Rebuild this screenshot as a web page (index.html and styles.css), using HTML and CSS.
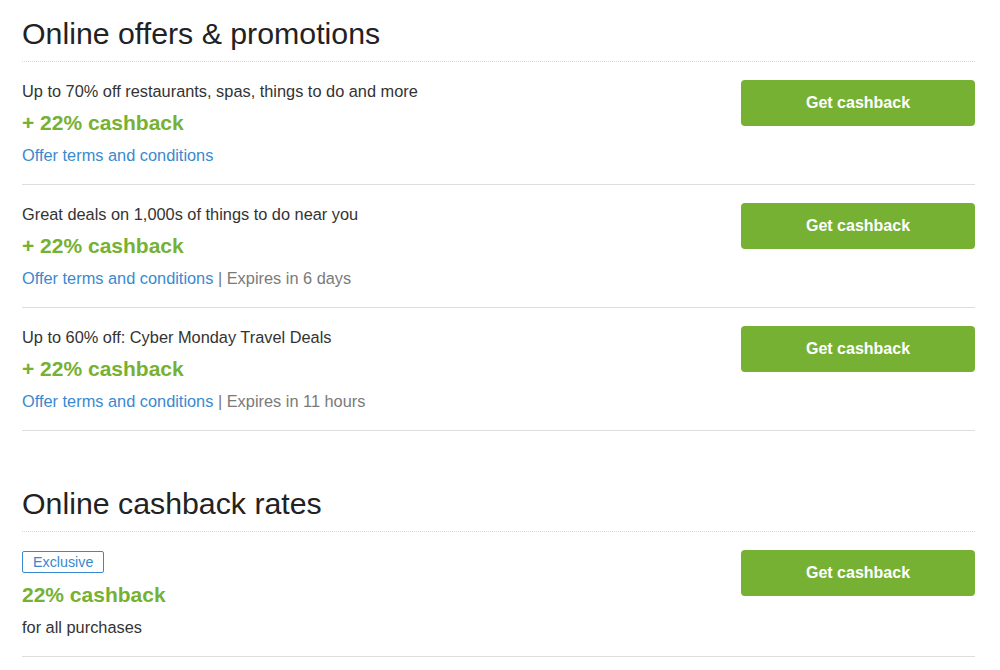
FILE: index.html
```html
<!DOCTYPE html>
<html>
<head>
<meta charset="utf-8">
<link rel="stylesheet" href="styles.css">
</head>
<body>
<main class="page">
  <section class="section">
    <h2 class="section-title">Online offers &amp; promotions</h2>
    <div class="offer">
      <div class="offer-info">
        <div class="offer-desc">Up to 70% off restaurants, spas, things to do and more</div>
        <div class="offer-rate">+ 22% cashback</div>
        <div class="offer-meta"><a class="terms" href="#">Offer terms and conditions</a></div>
      </div>
      <a class="btn" href="#">Get cashback</a>
    </div>
    <div class="offer">
      <div class="offer-info">
        <div class="offer-desc">Great deals on 1,000s of things to do near you</div>
        <div class="offer-rate">+ 22% cashback</div>
        <div class="offer-meta"><a class="terms" href="#">Offer terms and conditions</a> | Expires in 6 days</div>
      </div>
      <a class="btn" href="#">Get cashback</a>
    </div>
    <div class="offer">
      <div class="offer-info">
        <div class="offer-desc">Up to 60% off: Cyber Monday Travel Deals</div>
        <div class="offer-rate">+ 22% cashback</div>
        <div class="offer-meta"><a class="terms" href="#">Offer terms and conditions</a> | Expires in 11 hours</div>
      </div>
      <a class="btn" href="#">Get cashback</a>
    </div>
  </section>
  <section class="section section-rates">
    <h2 class="section-title">Online cashback rates</h2>
    <div class="offer">
      <div class="offer-info">
        <span class="badge">Exclusive</span>
        <div class="offer-rate">22% cashback</div>
        <div class="offer-note">for all purchases</div>
      </div>
      <a class="btn" href="#">Get cashback</a>
    </div>
  </section>
</main>
</body>
</html>
```
FILE: styles.css
```css
* { box-sizing: border-box; }
html, body { margin: 0; padding: 0; background: #fff; }
body {
  font-family: "Liberation Sans", Arial, sans-serif;
  color: #333;
}
.page {
  width: 953px;
  margin-left: 22px;
  padding-top: 16px;
}
.section-title {
  margin: 0;
  font-size: 30.3px;
  line-height: 36px;
  font-weight: normal;
  color: #222;
  padding-bottom: 9px;
  border-bottom: 1px dotted #d6d6d6;
}
.section-rates { margin-top: 55px; }
.offer {
  display: flex;
  justify-content: space-between;
  align-items: flex-start;
  padding: 18px 0 19px;
  border-bottom: 1px solid #dedede;
}
.offer-info {
  display: flex;
  flex-direction: column;
  align-items: flex-start;
  padding-top: 1px;
}
.offer-desc, .offer-meta, .offer-note {
  font-size: 16.35px;
  line-height: 20px;
}
.offer-desc { color: #333; }
.offer-rate {
  margin-top: 8px;
  font-size: 21px;
  line-height: 28px;
  font-weight: bold;
  color: #76b133;
}
.offer-meta, .offer-note { margin-top: 8px; }
.offer-meta { color: #7a7a7a; }
.offer-note { color: #333; }
.terms { color: #3a89cf; text-decoration: none; }
.badge {
  display: inline-block;
  height: 22px;
  line-height: 20px;
  padding: 0 10px;
  border: 1px solid #3a89cf;
  border-radius: 2px;
  color: #3a89cf;
  font-size: 14.3px;
}
.btn {
  width: 234px;
  height: 46px;
  display: flex;
  align-items: center;
  justify-content: center;
  background: #76b133;
  color: #fff;
  font-weight: bold;
  font-size: 16px;
  text-decoration: none;
  border-radius: 4px;
}
```
